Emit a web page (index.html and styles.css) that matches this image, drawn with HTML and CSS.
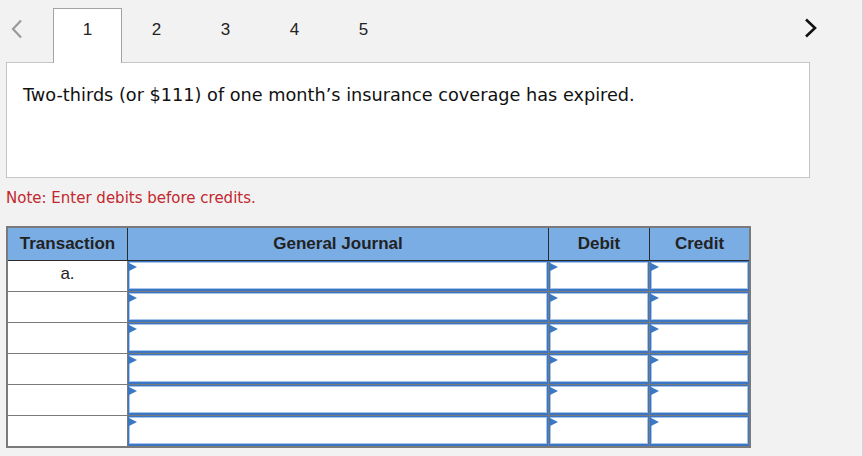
FILE: index.html
```html
<!DOCTYPE html>
<html lang="en">
<head>
<meta charset="utf-8">
<title>Journal entry</title>
<link rel="stylesheet" href="styles.css">
</head>
<body>
<div class="page">
  <div class="nav">
    <div class="prev">
      <svg width="14" height="20" viewBox="0 0 14 20"><polyline points="11,1.5 3,10 11,18.5" fill="none" stroke="#9a9a9a" stroke-width="2.2"/></svg>
    </div>
    <div class="tabs">
      <div class="tab active">1</div>
      <div class="tab">2</div>
      <div class="tab">3</div>
      <div class="tab">4</div>
      <div class="tab">5</div>
    </div>
    <div class="next">
      <svg width="14" height="20" viewBox="0 0 14 20"><polyline points="2,1.5 11,10 2,18.5" fill="none" stroke="#111" stroke-width="2.6"/></svg>
    </div>
  </div>
  <div class="panel">
    <p class="problem">Two-thirds (or $111) of one month’s insurance coverage has expired.</p>
  </div>
  <p class="note">Note: Enter debits before credits.</p>
  <div class="journal">
    <div class="th">Transaction</div>
    <div class="th">General Journal</div>
    <div class="th">Debit</div>
    <div class="th last">Credit</div>

    <div class="td label">a.</div>
    <div class="td"><div class="field"></div></div>
    <div class="td"><div class="field"></div></div>
    <div class="td last"><div class="field"></div></div>

    <div class="td label"></div>
    <div class="td"><div class="field"></div></div>
    <div class="td"><div class="field"></div></div>
    <div class="td last"><div class="field"></div></div>

    <div class="td label"></div>
    <div class="td"><div class="field"></div></div>
    <div class="td"><div class="field"></div></div>
    <div class="td last"><div class="field"></div></div>

    <div class="td label"></div>
    <div class="td"><div class="field"></div></div>
    <div class="td"><div class="field"></div></div>
    <div class="td last"><div class="field"></div></div>

    <div class="td label"></div>
    <div class="td"><div class="field"></div></div>
    <div class="td"><div class="field"></div></div>
    <div class="td last"><div class="field"></div></div>

    <div class="td label bottom"></div>
    <div class="td bottom"><div class="field"></div></div>
    <div class="td bottom"><div class="field"></div></div>
    <div class="td last bottom"><div class="field"></div></div>
  </div>
</div>
</body>
</html>
```
FILE: styles.css
```css
* { box-sizing: border-box; }
html, body { margin: 0; padding: 0; }
body {
  background: #f2f2f2;
  font-family: "DejaVu Sans", Verdana, sans-serif;
  color: #1a1a1a;
}
.page {
  width: 863px;
  height: 456px;
  overflow: hidden;
  border-right: 1px solid #d4d4d4;
}
.nav {
  display: flex;
  align-items: flex-start;
  height: 62px;
  padding-top: 8px;
}
.prev {
  width: 53px;
  padding-left: 10px;
  padding-top: 11px;
}
.prev svg, .next svg { display: block; }
.tabs { display: flex; }
.tab {
  width: 69px;
  height: 55px;
  padding-top: 11px;
  border: 1px solid transparent;
  border-bottom: none;
  text-align: center;
  font-family: "Liberation Sans", Arial, sans-serif;
  font-size: 17px;
  line-height: 20px;
  color: #222;
}
.tab.active {
  background: #fff;
  border-color: #a3a3a3;
  position: relative;
  z-index: 1;
}
.next {
  margin-left: auto;
  margin-right: 44px;
  padding-top: 10px;
}
.panel {
  margin-left: 6px;
  width: 804px;
  height: 116px;
  background: #fff;
  border: 1px solid #c4c4c4;
  padding: 22px 16px 0;
}
.problem {
  margin: 0;
  font-size: 17.7px;
  line-height: 20px;
  color: #111;
}
.note {
  margin: 11px 0 0 6px;
  font-size: 15px;
  line-height: 18px;
  color: #c2282e;
}
.journal {
  margin: 19px 0 0 6px;
  display: grid;
  grid-template-columns: 120px 421px 101px 99px;
  width: 745px;
  border: 2px solid #7a7a7a;
  background: #fff;
}
.th {
  height: 33px;
  background: #7aade4;
  border-right: 1px solid #2a2a2a;
  border-bottom: 1px solid #2a2a2a;
  font-family: "Liberation Sans", Arial, sans-serif;
  font-weight: bold;
  font-size: 17px;
  line-height: 32px;
  text-align: center;
  color: #222;
}
.td {
  height: 31px;
  border-right: 1px solid #7a7a7a;
  border-bottom: 1px solid #7a7a7a;
}
.last { border-right: none; }
.bottom { border-bottom: none; height: 30px; }
.label {
  font-family: "Liberation Sans", Arial, sans-serif;
  font-size: 17px;
  line-height: 26px;
  text-align: center;
  color: #222;
}
.field {
  position: relative;
  height: 30px;
  border: 1px solid #3a76c4;
  border-bottom-width: 2px;
  box-shadow: inset 1px 1px 0 #a7c4ea, inset -1px -1px 0 #a7c4ea;
  background: #fff;
}
.field::before {
  content: "";
  position: absolute;
  left: 0;
  top: 1px;
  width: 0;
  height: 0;
  border-left: 8px solid #3b78c4;
  border-top: 4.5px solid transparent;
  border-bottom: 4.5px solid transparent;
}
```
